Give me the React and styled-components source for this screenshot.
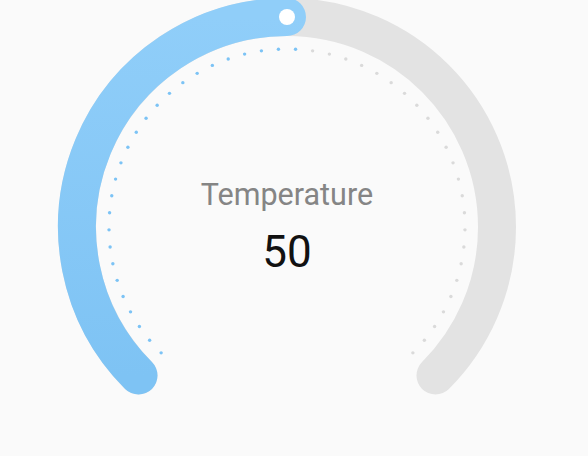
import React from "react";
import styled, { createGlobalStyle } from "styled-components";

const GlobalStyle = createGlobalStyle`
  html, body {
    margin: 0;
    padding: 0;
    background: #fafafa;
  }
  body {
    font-family: Roboto, "Liberation Sans", sans-serif;
  }
`;

// gauge geometry
const CX = 287;
const CY = 227;
const R = 210;
const DOT_R = 178;
const START = 135;
const SWEEP = 270;
const DOTS = 50;

const polar = (r, deg) => {
  const a = (deg * Math.PI) / 180;
  return [CX + r * Math.cos(a), CY + r * Math.sin(a)];
};

const arcPath = (r, from, to) => {
  const [x1, y1] = polar(r, from);
  const [x2, y2] = polar(r, to);
  const large = to - from > 180 ? 1 : 0;
  return `M ${x1} ${y1} A ${r} ${r} 0 ${large} 1 ${x2} ${y2}`;
};

const Page = styled.div`
  width: 588px;
  height: 456px;
  display: grid;
  justify-items: start;
  align-items: start;
  overflow: hidden;

  & > * {
    grid-area: 1 / 1;
  }
`;

const Dial = styled.svg`
  display: block;
  width: 588px;
  height: 456px;
`;

const Readout = styled.div`
  width: ${CX * 2}px;
  display: flex;
  flex-direction: column;
  align-items: center;
  gap: 13px;
  padding-top: 177px;
`;

const Label = styled.div`
  font-size: 30.5px;
  line-height: 36px;
  color: #858585;
`;

const Value = styled.div`
  font-size: 44px;
  line-height: 52px;
  color: #111;
`;

const Gauge = ({ label, value }) => {
  const valueAngle = START + (SWEEP * value) / 100;
  const [kx, ky] = polar(R, valueAngle);
  const lit = Math.floor((DOTS * value) / 100);

  const dots = Array.from({ length: DOTS }, (_, i) => {
    const [x, y] = polar(DOT_R, START + (SWEEP * i) / (DOTS - 1));
    return (
      <circle
        key={i}
        cx={x}
        cy={y}
        r={1.7}
        fill={i <= lit ? "#7cc3f5" : "#dadada"}
      />
    );
  });

  return (
    <Page>
      <Dial viewBox="0 0 588 456">
        <defs>
          <linearGradient id="fillGrad" x1="0" y1="0" x2="0" y2="1">
            <stop offset="0" stopColor="#90cef9" />
            <stop offset="1" stopColor="#7ec3f4" />
          </linearGradient>
        </defs>
        <path
          d={arcPath(R, START, START + SWEEP)}
          fill="none"
          stroke="#e3e3e3"
          strokeWidth={38}
          strokeLinecap="round"
        />
        <path
          d={arcPath(R, START, valueAngle)}
          fill="none"
          stroke="url(#fillGrad)"
          strokeWidth={38}
          strokeLinecap="round"
        />
        {dots}
        <circle cx={kx} cy={ky} r={8} fill="#fff" />
      </Dial>
      <Readout>
        <Label>{label}</Label>
        <Value>{value}</Value>
      </Readout>
    </Page>
  );
};

export default function App() {
  return (
    <>
      <GlobalStyle />
      <Gauge label="Temperature" value={50} />
    </>
  );
}
